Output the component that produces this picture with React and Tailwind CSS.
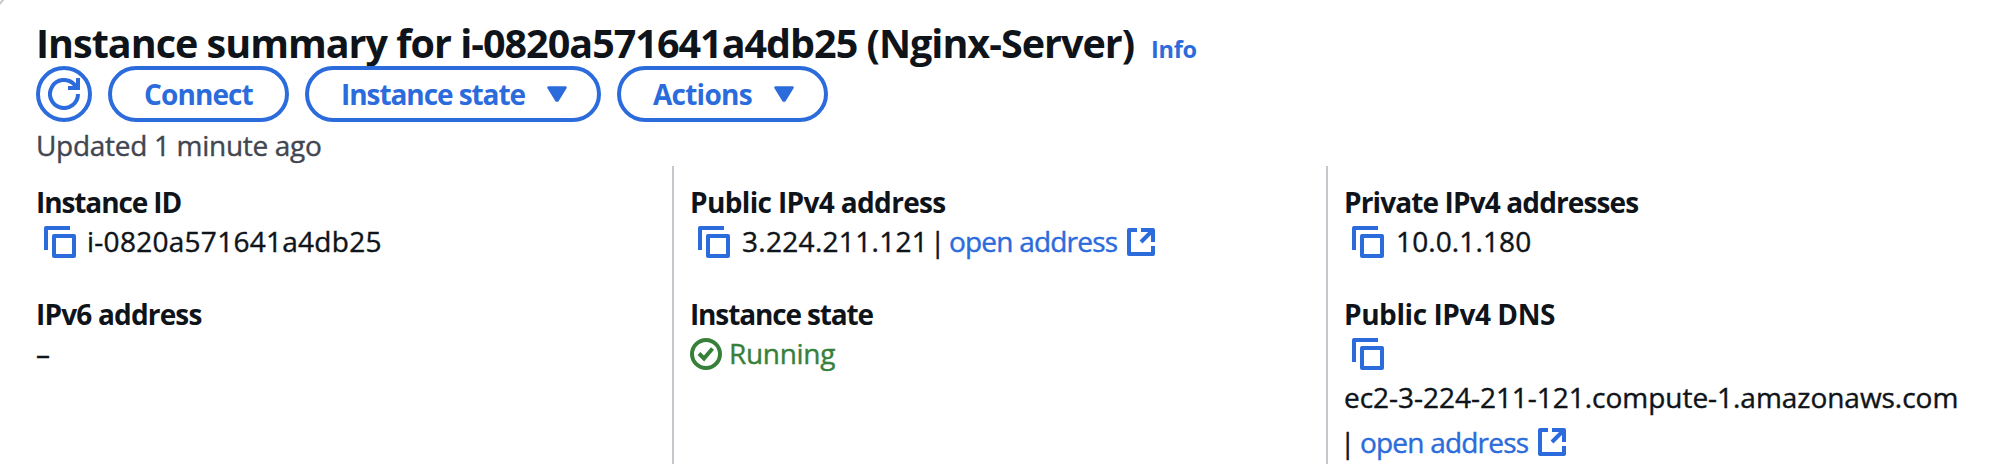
import React from "react";

function CopyIcon() {
  return (
    <svg className="ml-2 size-8 shrink-0" viewBox="0 0 32 32" fill="none" stroke="#2b6bdb" strokeWidth="4" strokeLinejoin="round">
      <path d="M26 2H2v22" />
      <path d="M10 10h20v20H10z" />
    </svg>
  );
}

function ExternalIcon() {
  return (
    <svg className="size-7 shrink-0" viewBox="0 0 28 28" fill="none" stroke="#2b6bdb" strokeWidth="4" strokeLinejoin="round">
      <path d="M10 2H2v24h24v-8" />
      <path d="M14 2h12v12M26 2L14 14" />
    </svg>
  );
}

function RefreshIcon() {
  return (
    <svg className="size-8" viewBox="0 0 32 32" fill="none" stroke="#2b6bdb" strokeWidth="4">
      <path d="M30 16A14 14 0 1 1 26 6.2L30 10" />
      <path d="M30 0v10H20" />
    </svg>
  );
}

function CheckIcon() {
  return (
    <svg className="size-8 shrink-0" viewBox="0 0 32 32" fill="none" stroke="#37803a" strokeWidth="4">
      <circle cx="16" cy="16" r="14" />
      <path d="M9 15.5l5 5L22.5 10.5" />
    </svg>
  );
}

function Caret() {
  return (
    <svg className="h-4 w-5 shrink-0" viewBox="0 0 20 16" fill="#2b6bdb" stroke="#2b6bdb" strokeWidth="2.5" strokeLinejoin="round">
      <path d="M1.5 1.5h17L10.5 14.5h-1z" />
    </svg>
  );
}

function Button({ width, children }) {
  return (
    <button className={`flex h-14 items-center rounded-full border-4 border-[#2b6bdb] pl-[32px] font-bold text-[#2b6bdb] ${width}`}>
      {children}
    </button>
  );
}

function Field({ label, spacing, children }) {
  return (
    <div>
      <div className={`h-10 leading-10 font-bold ${spacing}`}>{label}</div>
      <div className="[-webkit-text-stroke:0.4px_currentColor]">{children}</div>
    </div>
  );
}

export default function App() {
  return (
    <main className="relative h-[464px] w-[1994px] overflow-hidden bg-white pt-[22px] font-['Open_Sans',sans-serif] text-[28px] whitespace-nowrap text-[#0f141a]">
      <svg className="absolute top-0 left-0 size-4" viewBox="0 0 16 16" fill="none" stroke="#c6c6cd" strokeWidth="2">
        <path d="M-1 5Q1 2 4 -1" />
      </svg>
      <header className="pl-9">
        <div className="flex h-11 items-baseline leading-[42px]">
          <h1 className="text-[39.5px] font-bold tracking-[-1px]">Instance summary for i-0820a571641a4db25 (Nginx-Server)</h1>
          <a className="ml-[17px] text-[23.5px] font-bold tracking-[-0.3px] text-[#2b6bdb]">Info</a>
        </div>
        <div className="flex gap-4">
          <button className="flex size-14 items-center justify-center rounded-full border-4 border-[#2b6bdb]">
            <RefreshIcon />
          </button>
          <Button width="w-[181px]"><span className="tracking-[-0.9px]">Connect</span></Button>
          <Button width="w-[296px]"><span className="w-[206px] text-left tracking-[-1.07px]">Instance state</span><Caret /></Button>
          <Button width="w-[211px]"><span className="w-[121px] text-left tracking-[-0.75px]">Actions</span><Caret /></Button>
        </div>
        <p className="h-11 pt-1 leading-[38px] tracking-[-0.3px] text-[#424650] [-webkit-text-stroke:0.4px_currentColor]">Updated 1 minute ago</p>
      </header>
      <div className="grid h-[298px] grid-cols-[672px_654px_668px]">
        <section className="flex flex-col gap-8 pt-4 pl-9">
          <Field label="Instance ID" spacing="tracking-[-1.1px]">
            <div className="flex h-10 items-center leading-[38px]"><CopyIcon /><span className="ml-[11px] h-10 tracking-[0.27px]">i-0820a571641a4db25</span></div>
          </Field>
          <Field label="IPv6 address" spacing="tracking-[-0.83px]">
            <div className="h-10 leading-[38px]">–</div>
          </Field>
        </section>
        <section className="flex flex-col gap-8 border-l-2 border-[#c6c6cd] pt-4 pl-4">
          <Field label="Public IPv4 address" spacing="tracking-[-0.65px]">
            <div className="flex h-10 items-center leading-[38px]">
              <CopyIcon />
              <span className="ml-3 h-10 w-[188px] tracking-[0.3px]">3.224.211.121</span>
              <span className="h-10 w-[19px]">|</span>
              <a className="h-10 w-[178px] tracking-[-0.8px] text-[#2b6bdb]">open address</a>
              <ExternalIcon />
            </div>
          </Field>
          <Field label="Instance state" spacing="tracking-[-1.15px]">
            <div className="flex h-10 items-center leading-[38px] text-[#37803a]"><CheckIcon /><span className="ml-[7px] h-10 tracking-[-0.3px]">Running</span></div>
          </Field>
        </section>
        <section className="flex flex-col gap-8 border-l-2 border-[#c6c6cd] pt-4 pl-4">
          <Field label="Private IPv4 addresses" spacing="tracking-[-0.88px]">
            <div className="flex h-10 items-center leading-[38px]"><CopyIcon /><span className="ml-3 h-10 tracking-[0.12px]">10.0.1.180</span></div>
          </Field>
          <Field label="Public IPv4 DNS" spacing="tracking-[-0.43px]">
            <div className="flex h-10 items-center"><CopyIcon /></div>
            <div className="h-11 leading-[46px] tracking-[-0.03px]">ec2-3-224-211-121.compute-1.amazonaws.com</div>
            <div className="flex h-12 items-center leading-[44px]">
              <span className="-ml-1.5 w-[22px] pl-0.5">|</span>
              <a className="w-[178px] tracking-[-0.8px] text-[#2b6bdb]">open address</a>
              <ExternalIcon />
            </div>
          </Field>
        </section>
      </div>
    </main>
  );
}
